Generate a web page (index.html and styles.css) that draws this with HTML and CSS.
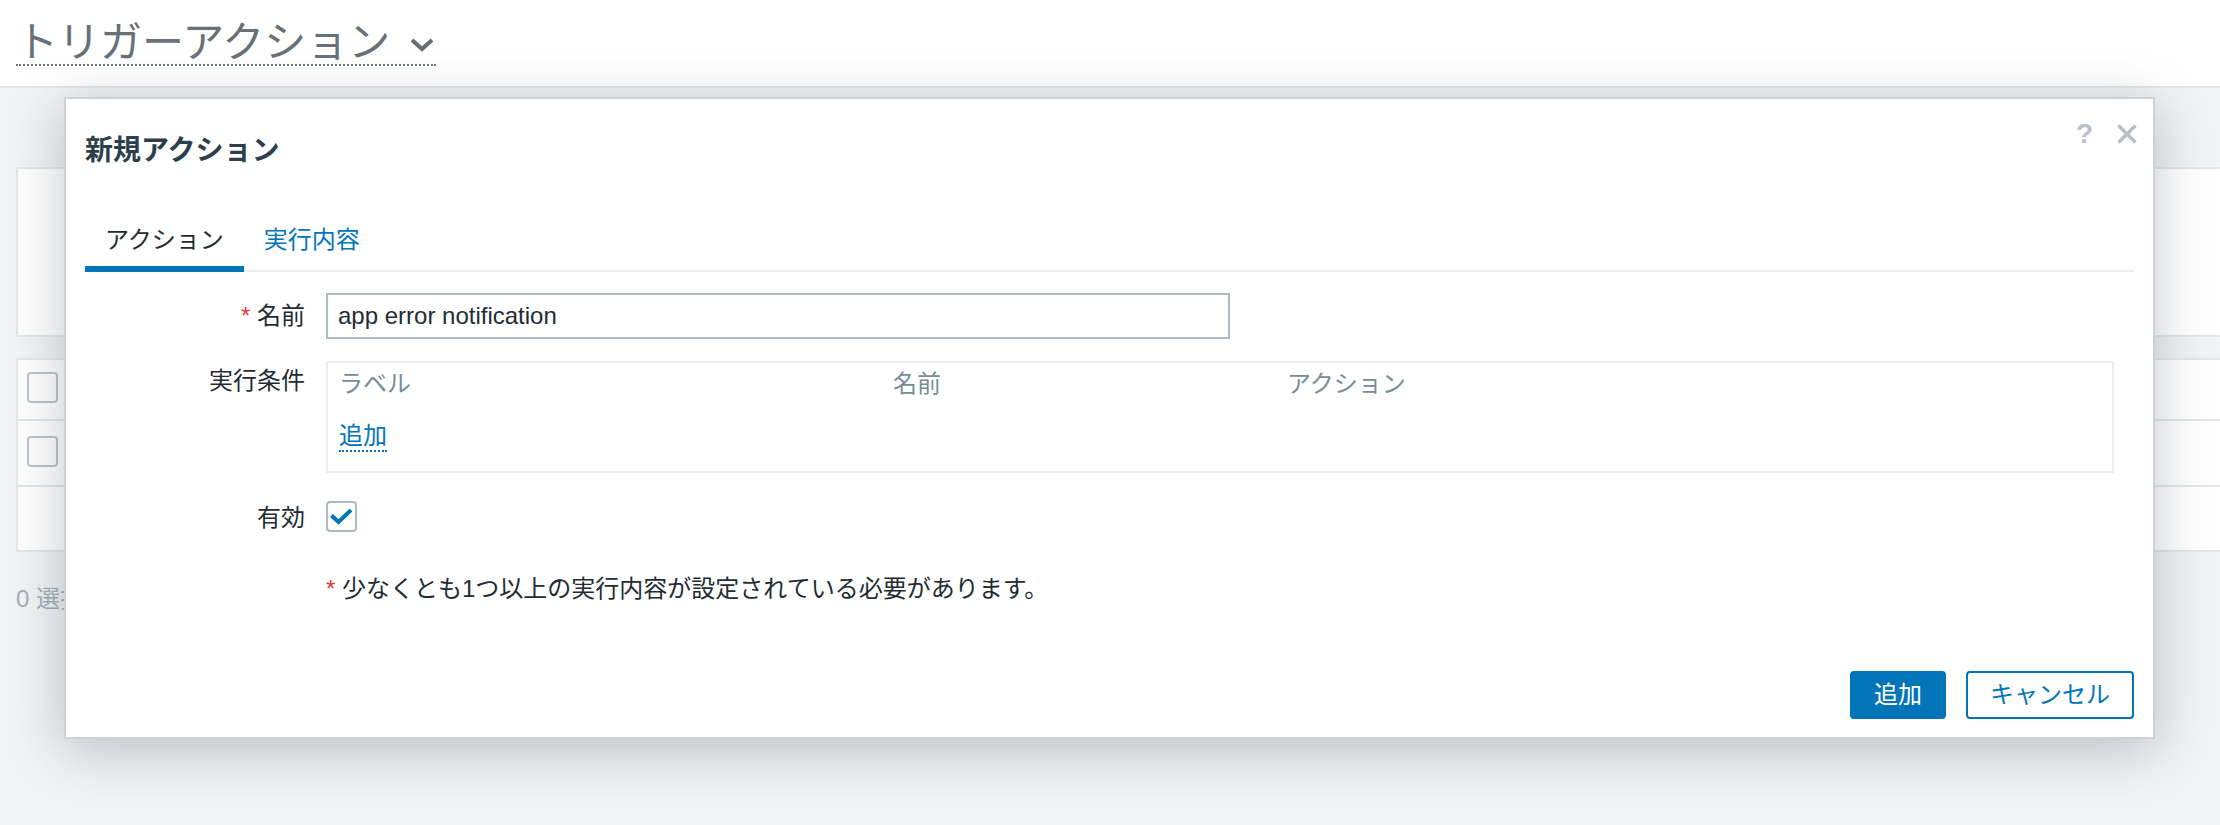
FILE: index.html
```html
<!DOCTYPE html>
<html lang="ja">
<head>
<meta charset="utf-8">
<title>トリガーアクション</title>
<link rel="stylesheet" href="styles.css">
</head>
<body>
<header class="page-header">
  <h1 class="page-title"><span class="page-title-text">トリガーアクション</span><svg class="chev" width="24" height="14" viewBox="0 0 24 14"><path d="M2 2 L12 11 L22 2" fill="none" stroke="#666e74" stroke-width="4"/></svg></h1>
</header>
<main class="content">
  <div class="filter-card"></div>
  <div class="list">
    <div class="list-row row-a"><span class="list-cb"></span></div>
    <div class="list-row row-b"><span class="list-cb"></span></div>
    <div class="list-row row-c"></div>
  </div>
  <div class="list-footer">0 選択</div>
</main>

<div class="dialog">
  <div class="dialog-head">
    <h4 class="dialog-title">新規アクション</h4>
  </div>
  <div class="dialog-controls">
    <span class="dlg-help">?</span>
    <svg class="dlg-close" width="20" height="20" viewBox="0 0 20 20"><path d="M1.5 1.5 L18.5 18.5 M18.5 1.5 L1.5 18.5" stroke="#b4c1c7" stroke-width="3.5" fill="none"/></svg>
  </div>
  <nav class="tabs">
    <a class="tab tab-active">アクション</a>
    <a class="tab">実行内容</a>
  </nav>
  <div class="form">
    <div class="form-row row-name">
      <label class="form-label"><span class="req">*</span> 名前</label>
      <div class="form-field"><input class="text-input" type="text" value="app error notification"></div>
    </div>
    <div class="form-row row-cond">
      <label class="form-label">実行条件</label>
      <div class="form-field">
        <div class="cond-box">
          <div class="cond-head">
            <span>ラベル</span>
            <span>名前</span>
            <span>アクション</span>
          </div>
          <div class="cond-add"><a class="dotted-link">追加</a></div>
        </div>
      </div>
    </div>
    <div class="form-row row-enabled">
      <label class="form-label label-cb">有効</label>
      <div class="form-field">
        <span class="checkbox"><svg width="27" height="27" viewBox="0 0 27 27"><path d="M3.5 12.5 L10.5 19 L23 7" fill="none" stroke="#0275b8" stroke-width="4"/></svg></span>
      </div>
    </div>
    <div class="form-row row-note">
      <span></span>
      <div class="form-field note"><span class="req">*</span> 少なくとも1つ以上の実行内容が設定されている必要があります。</div>
    </div>
  </div>
  <div class="dialog-foot">
    <button class="btn btn-primary" type="button">追加</button>
    <button class="btn btn-alt" type="button">キャンセル</button>
  </div>
</div>
</body>
</html>
```

FILE: styles.css
```css
* { box-sizing: border-box; }

html, body {
  margin: 0;
  padding: 0;
}

body {
  width: 2220px;
  height: 825px;
  overflow: hidden;
  background: #f1f3f5;
  font-family: "Liberation Sans", "Noto Sans CJK JP", sans-serif;
  font-size: 24px;
  color: #1f2c33;
  position: relative;
}

/* page header */
.page-header {
  height: 88px;
  background: #ffffff;
  border-bottom: 2px solid #e3e7ea;
  padding: 22px 0 0 16px;
}

.page-title {
  margin: 0;
  display: inline-flex;
  align-items: center;
  font-size: 42px;
  line-height: 42px;
  font-weight: normal;
  color: #687177;
  border-bottom: 2px dotted #6d767c;
}

.chev {
  margin-left: 20px;
  margin-right: 2px;
  margin-top: 4px;
}

/* page content behind dialog */
.content {
  padding: 79px 0 0 16px;
}

.filter-card {
  height: 170px;
  background: #ffffff;
  border: 2px solid #e3e7ea;
  border-right: none;
}

.list {
  margin-top: 21px;
  background: #ffffff;
  border-top: 2px solid #e3e7ea;
  border-left: 2px solid #e3e7ea;
}

.list-row {
  border-bottom: 2px solid #e3e7ea;
  padding: 12px 0 0 9px;
}

.row-a { height: 61px; }
.row-b { height: 66px; padding-top: 15px; }
.row-c { height: 65px; }

.list-cb {
  display: block;
  width: 31px;
  height: 31px;
  border: 2px solid #b9c5cb;
  border-radius: 4px;
  background: #ffffff;
}

.list-footer {
  margin-top: 32px;
  line-height: 30px;
  color: #a2afb6;
}

/* dialog */
.dialog {
  position: absolute;
  left: 64px;
  top: 97px;
  width: 2091px;
  height: 642px;
  background: #ffffff;
  border: 2px solid #cbd3d8;
  box-shadow: 0 10px 50px rgba(40, 55, 65, 0.28);
  padding: 0 19px 18px 19px;
  display: flex;
  flex-direction: column;
}

.dialog-head {
  padding-top: 35px;
}

.dialog-title {
  margin: 0;
  font-size: 28px;
  line-height: 34px;
  font-weight: bold;
  color: #2c3f4b;
}

.dialog-controls {
  position: absolute;
  top: 23px;
  right: 16px;
  display: flex;
  align-items: center;
  gap: 24px;
}

.dlg-help {
  font-size: 28px;
  line-height: 24px;
  font-weight: bold;
  color: #b4c1c7;
}

.dlg-close {
  display: block;
}

/* tabs */
.tabs {
  margin-top: 57px;
  display: flex;
  border-bottom: 2px solid #ebeef0;
}

.tab {
  display: block;
  padding: 0 20px 11px;
  line-height: 30px;
  margin-bottom: -2px;
  border-bottom: 6px solid transparent;
  color: #0275b8;
}

.tab-active {
  color: #1f2c33;
  border-bottom-color: #0275b8;
}

/* form */
.form {
  padding-top: 21px;
}

.form-row {
  display: grid;
  grid-template-columns: 220px 1fr;
  column-gap: 21px;
}

.form-label {
  text-align: right;
  line-height: 46px;
  color: #1f2c33;
}

.req {
  color: #e33734;
}

.row-name {
  margin-bottom: 22px;
}

.text-input {
  display: block;
  width: 904px;
  height: 46px;
  border: 2px solid #acbbc2;
  padding: 0 10px;
  font-family: "Liberation Sans", "Noto Sans CJK JP", sans-serif;
  font-size: 24px;
  color: #1f2c33;
  background: #ffffff;
  outline: none;
}

.row-cond {
  margin-bottom: 28px;
}

.row-cond .form-label {
  line-height: 40px;
}

.cond-box {
  width: 1788px;
  height: 112px;
  border: 2px solid #ebeef0;
  padding: 6px 11px 0 11px;
}

.cond-head {
  display: grid;
  grid-template-columns: 554px 394px 1fr;
  line-height: 30px;
  color: #768d99;
}

.cond-add {
  margin-top: 23px;
  line-height: 28px;
}

.dotted-link {
  display: inline-block;
  color: #0275b8;
  border-bottom: 2px dotted #0275b8;
}

.row-enabled {
  margin-bottom: 40px;
}

.label-cb {
  line-height: 33px;
}

.checkbox {
  display: flex;
  align-items: center;
  justify-content: center;
  width: 31px;
  height: 31px;
  border: 2px solid #acbbc2;
  border-radius: 4px;
  background: #ffffff;
}

.note {
  line-height: 30px;
  color: #1f2c33;
}

/* footer */
.dialog-foot {
  margin-top: auto;
  display: flex;
  justify-content: flex-end;
  gap: 20px;
}

.btn {
  height: 48px;
  padding: 0 22px;
  border-radius: 4px;
  border: 2px solid #0275b8;
  font-family: "Liberation Sans", "Noto Sans CJK JP", sans-serif;
  font-size: 24px;
  line-height: 44px;
}

.btn-primary {
  background: #0275b8;
  color: #ffffff;
}

.btn-alt {
  background: #ffffff;
  color: #0275b8;
}
```
